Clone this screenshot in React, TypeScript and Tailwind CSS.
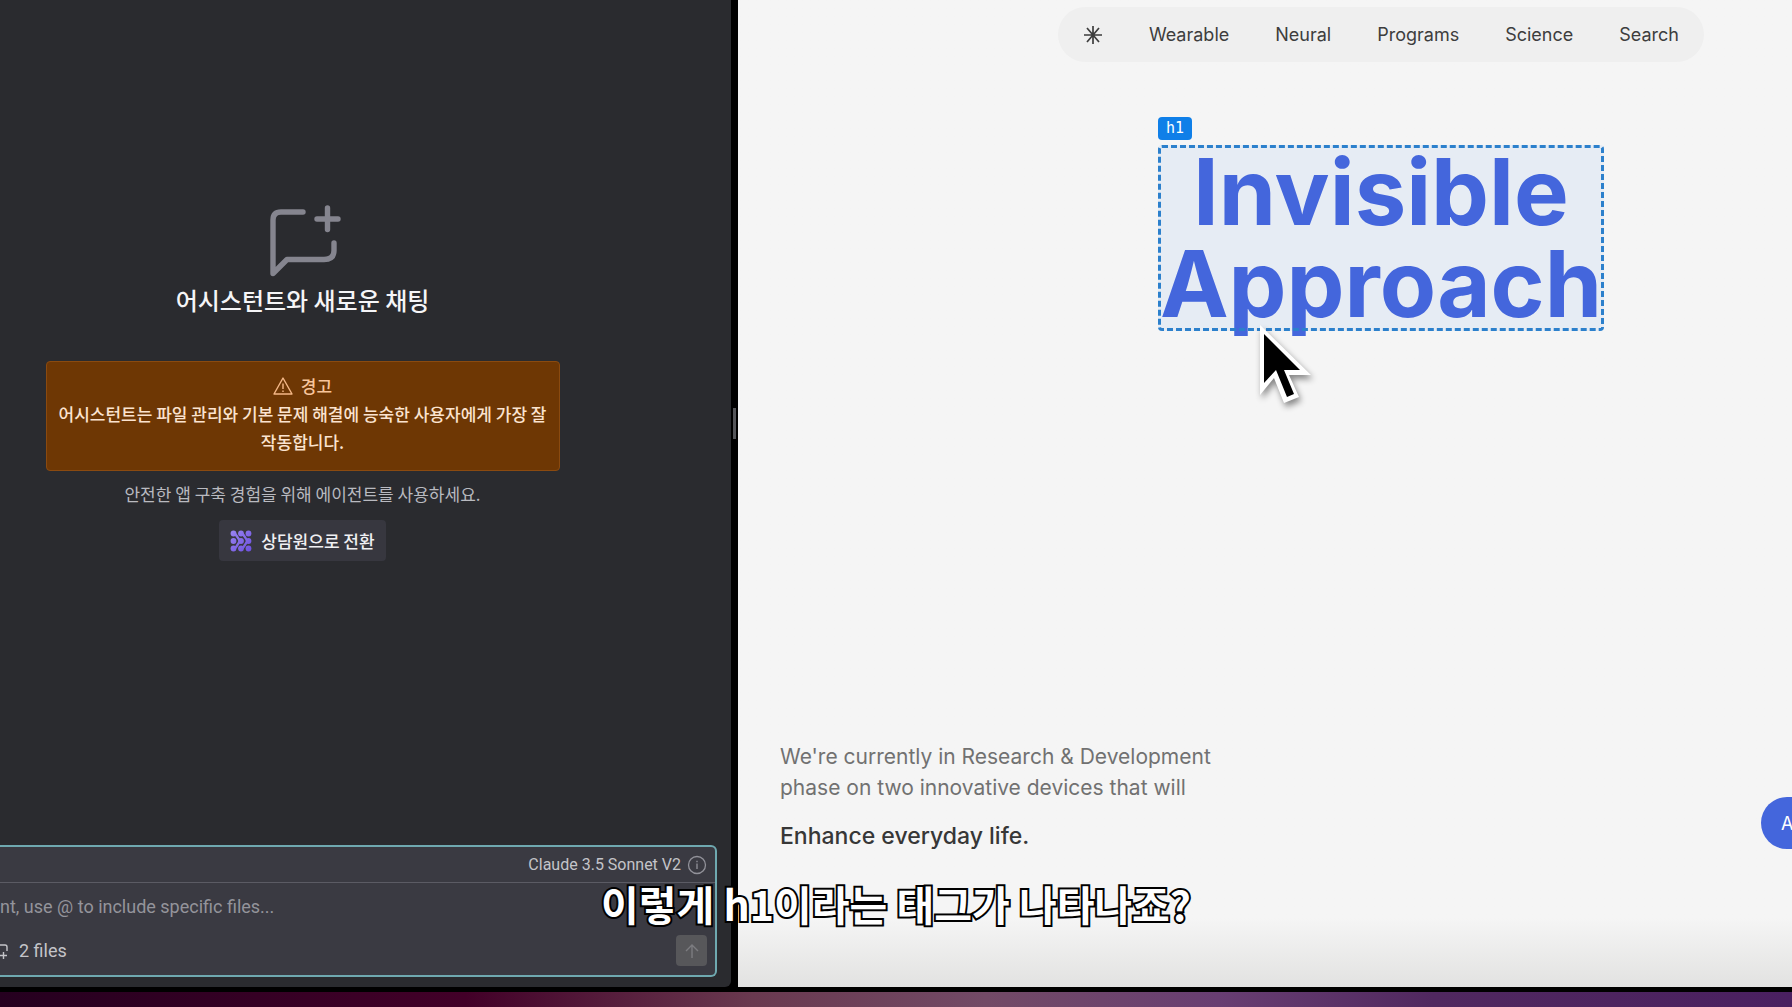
import React from 'react';

const navLinks = ['Wearable', 'Neural', 'Programs', 'Science', 'Search'];

const NewChatIcon = () => (
  <svg width="76" height="74" viewBox="-1 0 76 74" fill="none" stroke="#85858f" strokeWidth="5.4" strokeLinecap="round" strokeLinejoin="round">
    <path d="M37 8H15q-8 0-8 8V69.500L21 55.500H58q10 0 10-9V39" />
    <path d="M61.500 4V25.500M51 15H72" />
  </svg>
);

const WarningIcon = () => (
  <svg width="20" height="20" viewBox="0 0 20 20" fill="none" stroke="#f5b887" strokeWidth="1.4" strokeLinejoin="round">
    <path d="M10 2 19 18H1Z" />
    <path d="M10 7.5V13M10 14.5V16" />
  </svg>
);

const AgentIcon = () => (
  <svg width="22" height="22" viewBox="0 0 22 22" fill="url(#agent)" stroke="url(#agent)">
    <defs>
      <linearGradient id="agent" gradientUnits="userSpaceOnUse" x1="0" y1="0" x2="22" y2="22">
        <stop offset="0" stopColor="#9a86f0" />
        <stop offset="1" stopColor="#6c4ee0" />
      </linearGradient>
    </defs>
    {[3.5, 11, 18.5].map((y) => [3.5, 11, 18.5].map((x) => <circle key={`${x}-${y}`} cx={x} cy={y} r="2.9" strokeWidth="0" />))}
    <path d="M3.500 3.500C8 4 7 10 11 11C7 12 8 18 3.500 18.500M11 3.500C15.500 4 14.500 10 18.500 11C14.500 12 15.500 18 11 18.500" fill="none" strokeWidth="2.400" />
  </svg>
);

const InfoIcon = () => (
  <svg width="20" height="20" viewBox="0 0 20 20" fill="none" stroke="#92929a" strokeWidth="1.3">
    <circle cx="10" cy="10" r="8.5" />
    <path d="M10 8.5V14M10 5.8V7.2" />
  </svg>
);

function AssistantPanel() {
  return (
    <section className="flex w-[731px] shrink-0 flex-col rounded-br-md bg-[#2a2b2f] pr-[14px]">
      <div className="flex flex-1 flex-col items-center pt-[204px] pr-[112px] font-['Noto_Sans_CJK_KR',sans-serif]">
        <NewChatIcon />
        <h2 className="mt-1 text-[24px] leading-[36px] font-medium text-[#f5f5f7]">어시스턴트와 새로운 채팅</h2>
        <div className="mt-[43px] w-[514px] rounded border border-[#8a4a10] bg-[#6e3704] pt-[10px] pb-[14px] text-center text-[17px] leading-[28px] font-medium text-[#fbe3cf]">
          <p className="flex items-center justify-center gap-2 text-[#f8c59c]">
            <WarningIcon /> 경고
          </p>
          <p>어시스턴트는 파일 관리와 기본 문제 해결에 능숙한 사용자에게 가장 잘<br />작동합니다.</p>
        </div>
        <p className="mt-[8px] text-[17px] leading-[30px] text-[#b9bac0]">안전한 앱 구축 경험을 위해 에이전트를 사용하세요.</p>
        <button className="mt-[11px] flex h-[41px] items-center gap-[9px] rounded bg-[#37373f] px-[11px] text-[17px] font-medium text-[#f0f0f3]">
          <AgentIcon /> 상담원으로 전환
        </button>
      </div>

      <form className="mb-[10px] rounded-r-md border-y-2 border-r-2 border-[#6fa9b0] bg-[#3a3a42] font-['Roboto',sans-serif]">
        <div className="flex h-[36px] items-center justify-end gap-[6px] border-b border-[#5b5b64] pr-[8px] text-[16px] text-[#c4c4c9]">
          <span>Claude 3.5 Sonnet V2</span>
          <InfoIcon />
        </div>
        <input
          aria-label="Prompt"
          placeholder="nt, use @ to include specific files..."
          className="mt-[8px] block h-[30px] w-full bg-transparent text-[18px] text-[#c4c4c9] outline-none placeholder:text-[#94949b]"
        />
        <div className="mt-[14px] mb-[9px] flex h-[31px] items-center pr-[8px]">
          <button type="button" className="flex items-center gap-[10px] text-[18px] text-[#c4c4c9]">
            <svg width="9" height="18" viewBox="0 0 9 18" fill="none" stroke="#c4c4c9" strokeWidth="1.4">
              <path d="M0 3H5Q7 3 7 5V9" />
              <path d="M3.5 10V17M0 13.5H7" />
            </svg>
            2 files
          </button>
          <button type="submit" aria-label="Send" className="ml-auto flex size-[31px] items-center justify-center rounded bg-[#57575a]">
            <svg width="16" height="16" viewBox="0 0 16 16" fill="none" stroke="#7c7c80" strokeWidth="1.4">
              <path d="M8 15V2M2 8 8 2 14 8" />
            </svg>
          </button>
        </div>
      </form>
    </section>
  );
}

function Cursor() {
  return (
    <svg className="absolute top-[176px] left-[96px] drop-shadow-[2px_4px_3px_rgba(0,0,0,0.45)]" width="60" height="84" viewBox="0 0 60 84">
      <path d="M6 4V74L20 57 30 82 45 76 35 54H57Z" fill="#fff" />
      <path d="M10 13V62L22 49 33 76 40 73 30 49H46Z" fill="#000" />
    </svg>
  );
}

function Preview() {
  return (
    <section className="min-w-0 flex-1 overflow-hidden bg-linear-to-b from-[#f5f5f5] from-93% to-[#e2e2e1] font-['Inter',sans-serif]">
      <div className="flex h-full w-[122%] flex-col items-center pt-[7px]">
        <nav className="flex h-[55px] items-center gap-[46px] rounded-full bg-[#efefef] px-[25px] text-[18px] text-[#3d3d3d]">
          <svg width="20" height="20" viewBox="0 0 20 20" stroke="#3d3d3d" strokeWidth="1.7">
            <path d="M10 1V19M1 10H19M4 3 16 17M16 3 4 17" />
          </svg>
          {navLinks.map((link) => (
            <a key={link} href="#">{link}</a>
          ))}
        </nav>

        <div className="relative mt-[83px]">
          <span className="absolute -top-[28px] left-0 flex h-[23px] items-center rounded bg-[#0f7fe8] px-[8px] font-['DejaVu_Sans_Mono',monospace] text-[15px] text-white">h1</span>
          <h1 className="rounded bg-[#e6ecf4] px-[2px] py-px text-center text-[92px] leading-[92px] font-bold text-[#4466dc] outline-3 -outline-offset-3 outline-dashed outline-[#2c80cc]">
            Invisible<br />Approach
          </h1>
          <Cursor />
        </div>

        <div className="mt-auto mb-[134px] flex w-full items-end pl-[42px]">
          <div>
            <p className="text-[21px] leading-[31px] text-[#717171]">
              We're currently in Research &amp; Development<br />phase on two innovative devices that will
            </p>
            <p className="mt-[16px] text-[23px] leading-[34px] font-medium text-[#373737]">Enhance everyday life.</p>
          </div>
          <button className="mr-[131px] mb-1 ml-auto h-[52px] w-[132px] rounded-full bg-[#4466dc] pl-[20px] text-left text-[18px] text-white">A</button>
        </div>
      </div>
    </section>
  );
}

export default function App() {
  return (
    <div className="relative flex h-screen flex-col overflow-hidden bg-black">
      <main className="flex min-h-0 flex-1">
        <AssistantPanel />
        <div className="flex w-[7px] shrink-0 items-center justify-center bg-black pb-[140px]">
          <div className="h-[31px] w-[3px] bg-[#55565a]" />
        </div>
        <Preview />
      </main>
      <footer className="mt-[5px] h-[15px] bg-[linear-gradient(to_right,#25001f,#420028_26%,#69394f_42%,#724a66_55%,#683e72_68%,#50285f_80%,#4a2060)]" />
      <p className="absolute inset-x-0 bottom-[74px] text-center font-['Noto_Sans_CJK_KR',sans-serif] text-[41px] leading-[60px] font-bold text-white [paint-order:stroke_fill] [-webkit-text-stroke:4px_#000]">
        이렇게 h1이라는 태그가 나타나죠?
      </p>
    </div>
  );
}
